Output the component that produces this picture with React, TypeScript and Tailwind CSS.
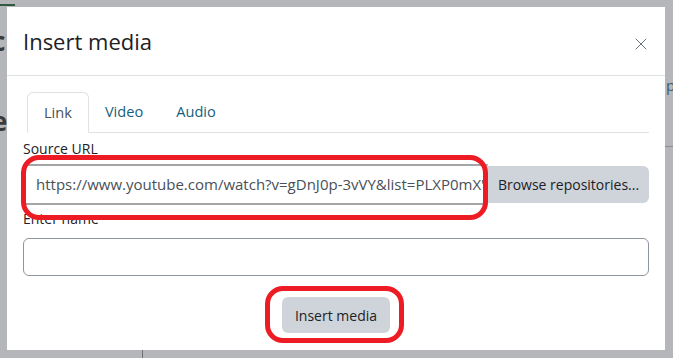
import { X } from "lucide-react";

const font = { fontFamily: '"Open Sans", "Noto Sans", sans-serif' };

const Annotation = ({ className }: { className: string }) => (
  <div
    className={`pointer-events-none absolute rounded-[18px] border-[5px] border-[#ed1c24] ${className}`}
  />
);

export default function App() {
  return (
    <div
      className="relative h-[358px] w-[673px] overflow-hidden bg-[#b5b6b9] p-[7px] text-[#1d2125]"
      style={font}
    >
      {/* page behind the backdrop */}
      <div className="absolute left-0 top-[4px] h-[2px] w-[15px] bg-[#2f5a3f]" />
      <div className="absolute left-[-8px] top-[28px] text-[26px] font-bold leading-none text-[#3a3b3d]">
        c
      </div>
      <div className="absolute left-[-8px] top-[108px] text-[26px] font-bold leading-none text-[#3a3b3d]">
        e
      </div>
      <div className="absolute left-[666px] top-[78px] text-[15px] leading-none text-[#3b5a74]">p</div>
      <div className="absolute left-[665px] top-[146px] h-px w-[8px] bg-[#8d8e91]" />
      <div className="absolute left-[142px] top-[350px] h-[8px] w-px bg-[#6d6e71]" />

      <div className="relative flex h-[343px] w-[658px] flex-col bg-white">
        <div className="flex h-[69px] shrink-0 items-center justify-between border-b border-[#dee2e6] pl-4 pr-[14px]">
          <h5 className="text-[22px] leading-none text-[#1d2125]">Insert media</h5>
          <X className="mt-[6px] h-[20px] w-[20px] text-[#6a737b]" strokeWidth={1.2} />
        </div>

        <div className="flex flex-1 flex-col px-4 pt-4 text-[14px]">
          <div className="ml-1 flex h-[41px] shrink-0 border-b border-[#dee2e6] text-[14.6px]">
            <div className="-mb-px flex items-center rounded-t-md border border-[#dee2e6] border-b-white bg-white px-4 text-[#495057]">
              Link
            </div>
            <div className="flex items-center px-4 text-[#155f7e]">Video</div>
            <div className="flex items-center px-[17px] text-[#155f7e]">Audio</div>
          </div>

          <label className="mt-[6px] h-[20px] leading-[20px]">Source URL</label>
          <div className="mt-[5px] flex h-[41px] shrink-0">
            <div className="flex flex-1 items-center overflow-hidden whitespace-nowrap border-x border-y-[2px] border-x-[#d7d8d9] border-y-[#a3a5a6] pl-3 text-[15px] text-[#495057]">
              https://www.youtube.com/watch?v=gDnJ0p-3vVY&amp;list=PLXP0mX'
            </div>
            <div className="my-[2px] flex w-[161px] items-center justify-center rounded-r-md bg-[#ced4da] text-[#1d2125]">
              Browse repositories...
            </div>
          </div>

          <label className="mt-[4px] h-[20px] leading-[20px]">Enter name</label>
          <div className="mt-[9px] h-[38px] shrink-0 rounded-md border border-[#8f959e]" />

          <div className="mt-[21px] flex justify-center">
            <div className="flex h-[36px] w-[108px] items-center justify-center rounded-md bg-[#ced4da] text-[#1d2125]">
              Insert media
            </div>
          </div>
        </div>
      </div>

      <Annotation className="left-[21px] top-[155px] h-[65px] w-[467px]" />
      <Annotation className="left-[265px] top-[286px] h-[57px] w-[139px]" />
    </div>
  );
}
